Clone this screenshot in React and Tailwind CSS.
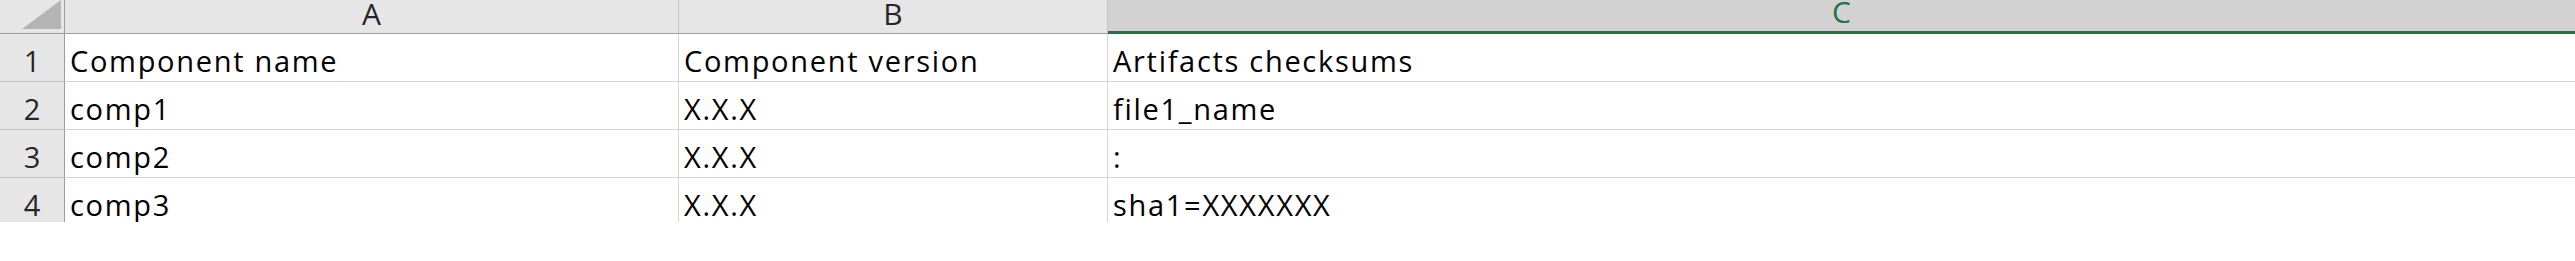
const rows = [
  ['1', 'Component name', 'Component version', 'Artifacts checksums'],
  ['2', 'comp1', 'X.X.X', 'file1_name'],
  ['3', 'comp2', 'X.X.X', ':'],
  ['4', 'comp3', 'X.X.X', 'sha1=XXXXXXX'],
];

const font = { fontFamily: '"Open Sans", "Noto Sans", sans-serif' };

function ColHeader({ label, selected, last }) {
  return (
    <div
      className={
        'flex items-end justify-center pb-[9px] text-[30px] leading-[20px] ' +
        (selected
          ? 'bg-[#d2d2d2] text-[#217346] border-b-[3px] border-[#217346]'
          : 'bg-[#e6e6e6] text-[#262626] border-b border-[#9e9e9e]') +
        (last ? '' : ' border-r border-r-[#c4c4c4]')
      }
    >
      {label}
    </div>
  );
}

export default function App() {
  return (
    <div className="w-full h-[261px] bg-white overflow-hidden" style={font}>
      <div className="grid grid-cols-[65px_614px_429px_1fr] grid-rows-[34px_48px_48px_48px_44px]">
        {/* corner */}
        <div className="bg-[#e6e6e6] border-b border-r border-[#9e9e9e] flex items-end justify-end pr-[3px] pb-[4px]">
          <svg width="39" height="29" viewBox="0 0 39 29">
            <polygon points="0,29 39,29 39,0" fill="#b4b4b4" />
          </svg>
        </div>
        <ColHeader label="A" />
        <ColHeader label="B" />
        <ColHeader label="C" selected last />

        {rows.map((r, i) => (
          <Row key={r[0]} cells={r} last={i === rows.length - 1} />
        ))}
      </div>
    </div>
  );
}

function Row({ cells, last }) {
  const [num, a, b, c] = cells;
  const cell =
    'pl-[5px] pt-[6px] text-[29px] leading-[41px] tracking-[1.7px] text-black whitespace-nowrap overflow-hidden ' +
    (last ? '' : 'border-b border-[#d4d4d4]');
  return (
    <>
      <div
        className={
          'bg-[#e6e6e6] border-r border-r-[#9e9e9e] text-center text-[29px] leading-[41px] pt-[6px] text-[#262626] ' +
          (last ? '' : 'border-b border-b-[#c4c4c4]')
        }
      >
        {num}
      </div>
      <div className={cell + ' border-r border-r-[#d4d4d4]'}>{a}</div>
      <div className={cell + ' border-r border-r-[#d4d4d4]'}>{b}</div>
      <div className={cell}>{c}</div>
    </>
  );
}
